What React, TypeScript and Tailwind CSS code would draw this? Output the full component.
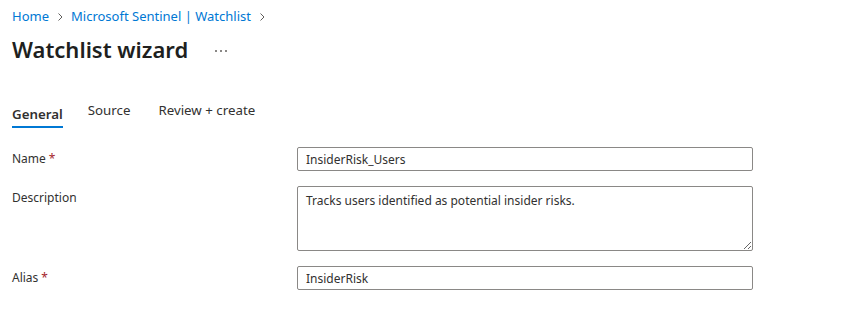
import React from 'react';

const font = { fontFamily: '"Segoe UI", "Noto Sans", "Open Sans", sans-serif' };

function Chevron() {
  return (
    <svg width="12" height="12" viewBox="0 0 12 12" className="mx-[5px] text-[#605e5c]">
      <path d="M4.5 2.5 L8 6 L4.5 9.5" fill="none" stroke="currentColor" strokeWidth="1" />
    </svg>
  );
}

function Field({ label, required, children }: { label: string; required?: boolean; children: React.ReactNode }) {
  return (
    <div className="flex items-start">
      <div className="w-[285px] shrink-0 pt-[3px] text-[12px] leading-[18px] text-[#323130]">
        {label}
        {required && <span className="ml-[3px] text-[#a4262c]">*</span>}
      </div>
      {children}
    </div>
  );
}

export default function App() {
  return (
    <div className="h-[325px] w-full bg-white px-3 text-[#323130]" style={font}>
      {/* breadcrumb */}
      <div className="flex h-[20px] items-center pt-[14px] text-[13px] text-[#0078d4]">
        <span>Home</span>
        <Chevron />
        <span>Microsoft Sentinel | Watchlist</span>
        <Chevron />
      </div>

      {/* title */}
      <div className="mt-[13px] flex items-center">
        <h1 className="text-[22px] font-semibold leading-[32px] text-[#201f1e]">Watchlist wizard</h1>
        <div className="ml-[27px] mt-[3px] flex gap-[3px]">
          <span className="h-[2px] w-[2px] bg-[#8a8886]" />
          <span className="h-[2px] w-[2px] bg-[#8a8886]" />
          <span className="h-[2px] w-[2px] bg-[#8a8886]" />
        </div>
      </div>

      {/* tabs */}
      <div className="mt-[35px] flex items-start text-[13.3px]">
        <div className="flex flex-col">
          <span className="pt-[4px] font-semibold leading-[20px]">General</span>
          <span className="mt-[2px] h-[2px] bg-[#0078d4]" />
        </div>
        <span className="ml-[25px] leading-[20px]">Source</span>
        <span className="ml-[28px] leading-[20px]">Review + create</span>
      </div>

      {/* form */}
      <div className="mt-[19px] flex flex-col gap-[15px]">
        <Field label="Name" required>
          <input
            readOnly
            value="InsiderRisk_Users"
            className="h-[24px] w-[456px] rounded-[2px] border border-[#8a8886] px-[8px] text-[12px] text-[#323130] outline-none"
            style={font}
          />
        </Field>
        <Field label="Description">
          <textarea
            readOnly
            value="Tracks users identified as potential insider risks."
            className="h-[65px] w-[456px] rounded-[2px] border border-[#8a8886] px-[8px] pt-[5px] text-[12px] leading-[18px] text-[#323130] outline-none"
            style={font}
          />
        </Field>
        <Field label="Alias" required>
          <input
            readOnly
            value="InsiderRisk"
            className="h-[24px] w-[456px] rounded-[2px] border border-[#8a8886] px-[8px] text-[12px] text-[#323130] outline-none"
            style={font}
          />
        </Field>
      </div>
    </div>
  );
}
